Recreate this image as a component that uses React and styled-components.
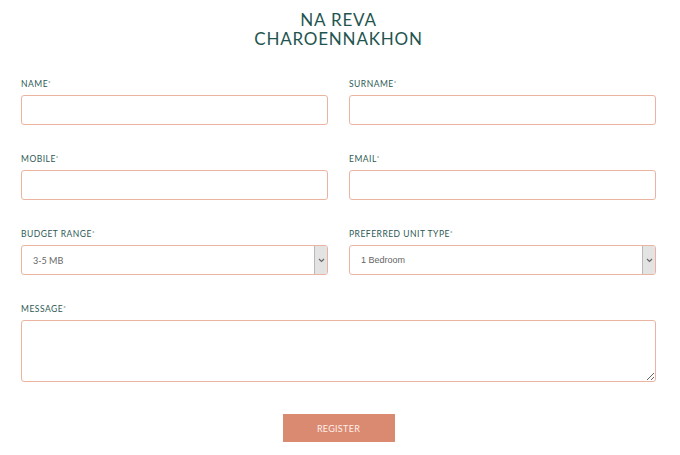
import React from 'react';
import styled, { createGlobalStyle } from 'styled-components';

const GlobalStyle = createGlobalStyle`
  body {
    margin: 0;
    background: #fff;
    font-family: Lato, "Noto Sans", sans-serif;
  }
`;

const Page = styled.div`
  width: 680px;
  height: 455px;
  overflow: hidden;
`;

const Form = styled.form`
  margin: 0 24px 0 21px;
  padding-top: 10px;
`;

const Title = styled.h1`
  margin: 0 0 31px;
  text-align: center;
  font-weight: 400;
  font-size: 17px;
  line-height: 19px;
  letter-spacing: 0.8px;
  color: #1f5550;
`;

const Grid = styled.div`
  display: grid;
  grid-template-columns: 1fr 1fr;
  column-gap: 21px;
`;

const Field = styled.div`
  display: flex;
  flex-direction: column;
  margin-bottom: ${(p) => (p.$last ? '32px' : '29px')};
  grid-column: ${(p) => (p.$wide ? '1 / -1' : 'auto')};
`;

const Label = styled.label`
  font-size: 8.5px;
  line-height: 11px;
  letter-spacing: 0.5px;
  color: #2d5a55;
  text-transform: uppercase;
  margin-bottom: 5px;
  sup {
    font-size: 6px;
    vertical-align: top;
    line-height: 8px;
  }
`;

const Input = styled.input`
  box-sizing: border-box;
  height: 30px;
  border: 1px solid #ebb4a1;
  border-radius: 3px;
  background: #fff;
  outline: none;
  padding: 0 10px;
`;

const TextArea = styled.textarea`
  box-sizing: border-box;
  height: 62px;
  border: 1px solid #ebb4a1;
  border-radius: 3px;
  background: #fff;
  outline: none;
  resize: vertical;
`;

const SelectBox = styled.div`
  box-sizing: border-box;
  height: 30px;
  display: flex;
  border: 1px solid #ebb4a1;
  border-radius: 3px;
  overflow: hidden;
  background: #fff;
`;

const SelectValue = styled.div`
  flex: 1;
  display: flex;
  align-items: center;
  padding-left: 11px;
  font-size: 9px;
  color: #666;
  font-family: ${(p) => (p.$plain ? '"Liberation Sans", Arial, sans-serif' : 'Lato, sans-serif')};
`;

const Arrow = styled.div`
  width: 12px;
  display: flex;
  align-items: center;
  justify-content: center;
  background: #e3e3e3;
  border-left: 1px solid #b9b9b9;
`;

const ButtonRow = styled.div`
  display: flex;
  justify-content: center;
`;

const Button = styled.button`
  width: 112px;
  height: 28px;
  border: none;
  background: #db8a72;
  color: #fdeee8;
  font-family: Lato, sans-serif;
  font-size: 9px;
  letter-spacing: 0.3px;
  cursor: pointer;
`;

const Chevron = () => (
  <svg width="7" height="5" viewBox="0 0 7 5">
    <path d="M1 1l2.5 2.5L6 1" fill="none" stroke="#666" strokeWidth="1.1" />
  </svg>
);

const Select = ({ value, plain }) => (
  <SelectBox>
    <SelectValue $plain={plain}>{value}</SelectValue>
    <Arrow>
      <Chevron />
    </Arrow>
  </SelectBox>
);

const App = () => {
  return (
    <Page>
      <GlobalStyle />
      <Form onSubmit={(e) => e.preventDefault()}>
        <Title>
          NA REVA
          <br />
          CHAROENNAKHON
        </Title>
        <Grid>
          <Field>
            <Label>Name<sup>*</sup></Label>
            <Input />
          </Field>
          <Field>
            <Label>Surname<sup>*</sup></Label>
            <Input />
          </Field>
          <Field>
            <Label>Mobile<sup>*</sup></Label>
            <Input />
          </Field>
          <Field>
            <Label>Email<sup>*</sup></Label>
            <Input />
          </Field>
          <Field>
            <Label>Budget Range<sup>*</sup></Label>
            <Select value="3-5 MB" />
          </Field>
          <Field>
            <Label>Preferred Unit Type<sup>*</sup></Label>
            <Select value="1 Bedroom" plain />
          </Field>
          <Field $wide $last>
            <Label>Message<sup>*</sup></Label>
            <TextArea />
          </Field>
        </Grid>
        <ButtonRow>
          <Button type="submit">REGISTER</Button>
        </ButtonRow>
      </Form>
    </Page>
  );
};

export default App;
